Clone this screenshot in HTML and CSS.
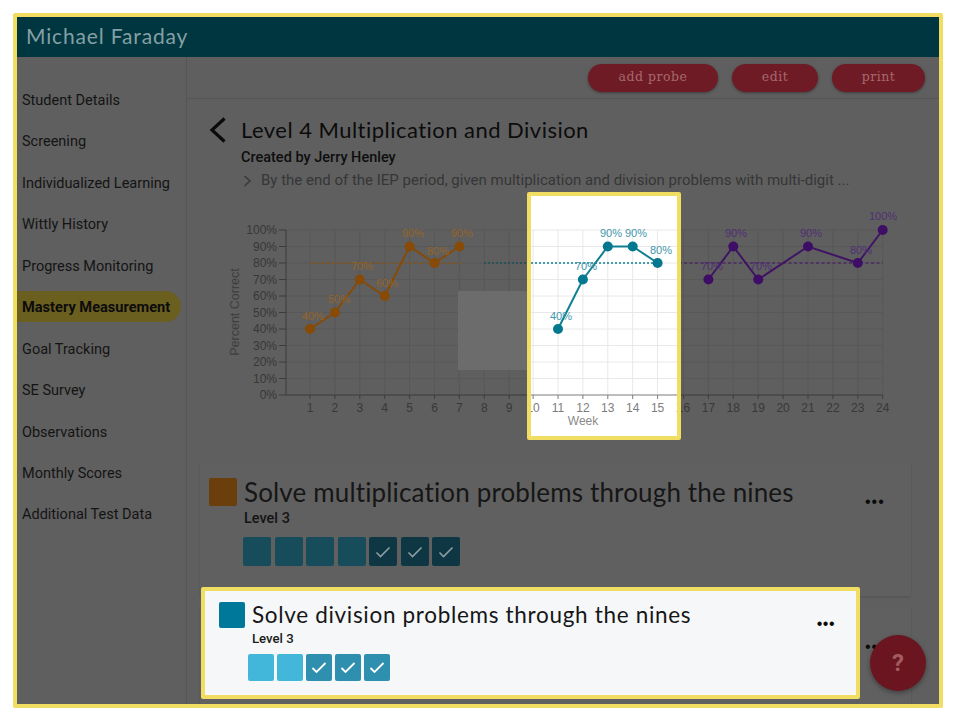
FILE: index.html
```html
<!DOCTYPE html>
<html lang="en">
<head>
<meta charset="utf-8">
<title>Mastery Measurement</title>
<link rel="stylesheet" href="styles.css">
</head>
<body>
<div class="frame">
  <header class="app-header">Michael Faraday</header>
  <div class="app-body">
    <nav class="sidebar">
      <a class="nav-item">Student Details</a>
      <a class="nav-item">Screening</a>
      <a class="nav-item">Individualized Learning</a>
      <a class="nav-item">Wittly History</a>
      <a class="nav-item">Progress Monitoring</a>
      <a class="nav-item active">Mastery Measurement</a>
      <a class="nav-item">Goal Tracking</a>
      <a class="nav-item">SE Survey</a>
      <a class="nav-item">Observations</a>
      <a class="nav-item">Monthly Scores</a>
      <a class="nav-item">Additional Test Data</a>
    </nav>
    <main class="main">
      <div class="toolbar">
        <button class="pill pill-probe">add probe</button>
        <button class="pill pill-edit">edit</button>
        <button class="pill pill-print">print</button>
      </div>
      <section class="heading">
        <svg class="back" width="18" height="26" viewBox="0 0 18 26"><path d="M15.5 1.5 L3 13 L15.5 24.5" fill="none" stroke="#0a0a0a" stroke-width="3.2"/></svg>
        <div class="heading-text">
          <h1 class="title">Level 4 Multiplication and Division</h1>
          <div class="creator">Created by Jerry Henley</div>
          <div class="objective">
            <svg class="caret" width="9" height="12" viewBox="0 0 9 12"><path d="M1.5 1 L7 6 L1.5 11" fill="none" stroke="#3a3a3a" stroke-width="1.6"/></svg>
            <span>By the end of the IEP period, given multiplication and division problems with multi-digit ...</span>
          </div>
        </div>
      </section>

      <svg class="chart" width="753" height="230" viewBox="186 205 753 230">
        <defs>
          <path id="grid" fill="none" d="M309 230V395M333.9 230V395M358.8 230V395M383.7 230V395M408.6 230V395M433.5 230V395M458.4 230V395M483.3 230V395M508.2 230V395M533.1 230V395M558 230V395M582.9 230V395M607.8 230V395M632.7 230V395M657.6 230V395M682.5 230V395M707.4 230V395M732.3 230V395M757.2 230V395M782.1 230V395M807 230V395M831.9 230V395M856.8 230V395M881.7 230V395M285 230H881.7M285 246.5H881.7M285 263H881.7M285 279.5H881.7M285 296H881.7M285 312.5H881.7M285 329H881.7M285 345.5H881.7M285 362H881.7M285 378.5H881.7"/>
          <path id="axis" fill="none" d="M278 230H285V395M278 246.5H285M278 263H285M278 279.5H285M278 296H285M278 312.5H285M278 329H285M278 345.5H285M278 362H285M278 378.5H285M278 395H881.7V399M309 395V399M333.9 395V399M358.8 395V399M383.7 395V399M408.6 395V399M433.5 395V399M458.4 395V399M483.3 395V399M508.2 395V399M533.1 395V399M558 395V399M582.9 395V399M607.8 395V399M632.7 395V399M657.6 395V399M682.5 395V399M707.4 395V399M732.3 395V399M757.2 395V399M782.1 395V399M807 395V399M831.9 395V399M856.8 395V399"/>
          <g id="weeks" text-anchor="middle">
            <text x="309" y="411.5">1</text><text x="333.9" y="411.5">2</text><text x="358.8" y="411.5">3</text><text x="383.7" y="411.5">4</text><text x="408.6" y="411.5">5</text><text x="433.5" y="411.5">6</text><text x="458.4" y="411.5">7</text><text x="483.3" y="411.5">8</text><text x="508.2" y="411.5">9</text><text x="533.1" y="411.5">10</text><text x="558" y="411.5">11</text><text x="582.9" y="411.5">12</text><text x="607.8" y="411.5">13</text><text x="632.7" y="411.5">14</text><text x="657.6" y="411.5">15</text><text x="682.5" y="411.5">16</text><text x="707.4" y="411.5">17</text><text x="732.3" y="411.5">18</text><text x="757.2" y="411.5">19</text><text x="782.1" y="411.5">20</text><text x="807" y="411.5">21</text><text x="831.9" y="411.5">22</text><text x="856.8" y="411.5">23</text><text x="881.7" y="411.5">24</text>
          </g>
        </defs>
        <use href="#grid" class="grid-dim"/>
        <use href="#axis" class="axis-dim"/>
        <g class="ylabels" text-anchor="end">
          <text x="276" y="234">100%</text><text x="276" y="250.5">90%</text><text x="276" y="267">80%</text><text x="276" y="283.5">70%</text><text x="276" y="300">60%</text><text x="276" y="316.5">50%</text><text x="276" y="333">40%</text><text x="276" y="349.5">30%</text><text x="276" y="366">20%</text><text x="276" y="382.5">10%</text><text x="276" y="399">0%</text>
        </g>
        <use href="#weeks" class="weeks-dim"/>
        <text class="ytitle" transform="translate(238 312) rotate(-90)" text-anchor="middle">Percent Correct</text>

        <path class="target orange-t" d="M309 263H460"/>
        <path class="series orange-s" d="M309 329L333.9 312.5L358.8 279.5L383.7 296L408.6 246.5L433.5 263L458.4 246.5"/>
        <g class="orange-p"><circle cx="309" cy="329" r="5"/><circle cx="333.9" cy="312.5" r="5"/><circle cx="358.8" cy="279.5" r="5"/><circle cx="383.7" cy="296" r="5"/><circle cx="408.6" cy="246.5" r="5"/><circle cx="433.5" cy="263" r="5"/><circle cx="458.4" cy="246.5" r="5"/></g>
        <g class="dlabel orange-l" text-anchor="middle"><text x="312" y="320">40%</text><text x="338" y="303">50%</text><text x="361" y="270">70%</text><text x="386" y="287">60%</text><text x="412" y="237">90%</text><text x="437" y="255">80%</text><text x="461" y="237">90%</text></g>

        <path class="target teal-t" d="M483 263H683"/>

        <path class="target purple-t" d="M683 263H881.7"/>
        <path class="series purple-s" d="M707.4 279.5L732.3 246.5L757.2 279.5L807 246.5L856.8 263L881.7 230"/>
        <g class="purple-p"><circle cx="707.4" cy="279.5" r="5"/><circle cx="732.3" cy="246.5" r="5"/><circle cx="757.2" cy="279.5" r="5"/><circle cx="807" cy="246.5" r="5"/><circle cx="856.8" cy="263" r="5"/><circle cx="881.7" cy="230" r="5"/></g>
        <g class="dlabel purple-l" text-anchor="middle"><text x="711" y="270">70%</text><text x="735" y="237">90%</text><text x="760" y="270">70%</text><text x="810" y="237">90%</text><text x="860" y="254">80%</text><text x="882" y="220">100%</text></g>
      </svg>

      <article class="card">
        <span class="swatch swatch-orange"></span>
        <div class="card-body">
          <h2 class="card-title">Solve multiplication problems through the nines</h2>
          <div class="card-level">Level 3</div>
          <div class="probes">
            <span class="probe"></span><span class="probe"></span><span class="probe"></span><span class="probe"></span>
            <span class="probe done"><svg width="16" height="12" viewBox="0 0 16 12"><path d="M1.5 6.5L5.5 10.5L14.5 1.5" fill="none" stroke="#8c9da3" stroke-width="1.6"/></svg></span>
            <span class="probe done"><svg width="16" height="12" viewBox="0 0 16 12"><path d="M1.5 6.5L5.5 10.5L14.5 1.5" fill="none" stroke="#8c9da3" stroke-width="1.6"/></svg></span>
            <span class="probe done"><svg width="16" height="12" viewBox="0 0 16 12"><path d="M1.5 6.5L5.5 10.5L14.5 1.5" fill="none" stroke="#8c9da3" stroke-width="1.6"/></svg></span>
          </div>
        </div>
        <span class="more">•••</span>
      </article>
      <article class="card card-next">
        <span class="more">•••</span>
      </article>
    </main>
  </div>

  <div class="ghost-tip"></div>

  <div class="spot spot-chart">
    <svg width="146" height="240" viewBox="531 196 146 240">
      <use href="#grid" class="grid-lit"/>
      <path class="axis-lit" d="M531 395H677M533.1 395V399M558 395V399M582.9 395V399M607.8 395V399M632.7 395V399M657.6 395V399"/>
      <use href="#weeks" class="weeks-lit"/>
      <text class="week-title" x="583" y="425" text-anchor="middle">Week</text>
      <path class="target teal-lit" d="M531 263H658"/>
      <path class="series teal-line" d="M558 329L582.9 279.5L607.8 246.5L632.7 246.5L657.6 263"/>
      <g class="teal-p"><circle cx="558" cy="329" r="5"/><circle cx="582.9" cy="279.5" r="5"/><circle cx="607.8" cy="246.5" r="5"/><circle cx="632.7" cy="246.5" r="5"/><circle cx="657.6" cy="263" r="5"/></g>
      <g class="dlabel teal-l" text-anchor="middle"><text x="561" y="320">40%</text><text x="586" y="270">70%</text><text x="611" y="237">90%</text><text x="636" y="237">90%</text><text x="661" y="254">80%</text></g>
    </svg>
  </div>

  <article class="spot spot-card">
    <span class="lit-swatch"></span>
    <div class="lit-body">
      <h2 class="lit-title">Solve division problems through the nines</h2>
      <div class="lit-level">Level 3</div>
      <div class="lit-probes">
        <span class="lit-probe"></span><span class="lit-probe"></span>
        <span class="lit-probe done"><svg width="16" height="13" viewBox="0 0 16 13"><path d="M1.5 7L5.5 11L14.5 2" fill="none" stroke="#fff" stroke-width="1.8"/></svg></span>
        <span class="lit-probe done"><svg width="16" height="13" viewBox="0 0 16 13"><path d="M1.5 7L5.5 11L14.5 2" fill="none" stroke="#fff" stroke-width="1.8"/></svg></span>
        <span class="lit-probe done"><svg width="16" height="13" viewBox="0 0 16 13"><path d="M1.5 7L5.5 11L14.5 2" fill="none" stroke="#fff" stroke-width="1.8"/></svg></span>
      </div>
    </div>
    <span class="more lit-more">•••</span>
  </article>

  <button class="fab">?</button>
</div>
</body>
</html>
```
FILE: styles.css
```css
* { box-sizing: border-box; }
html, body { margin: 0; padding: 0; background: #fff; }
body { width: 960px; height: 720px; overflow: hidden; font-family: Roboto, "Liberation Sans", sans-serif; }

.frame {
  position: relative;
  width: 930px;
  height: 695px;
  margin: 13px 0 0 13px;
  border: 4px solid #f0dd62;
  border-radius: 2px;
  background: #5f5f5f;
  display: flex;
  flex-direction: column;
  overflow: hidden;
}
.app-header {
  flex: none;
  height: 40px;
  background: #00363f;
  color: #84a0a4;
  font-family: Lato, sans-serif;
  font-size: 21px;
  line-height: 38px;
  letter-spacing: .85px;
  padding-left: 9px;
}
.app-body { flex: 1; display: flex; min-height: 0; }

.sidebar {
  flex: none;
  width: 170px;
  padding: 23px 5px 0 0;
  border-right: 1px solid #555;
}
.nav-item {
  display: block;
  height: 41.45px;
  line-height: 41.45px;
  padding-left: 5px;
  font-size: 14.5px;
  color: #141414;
  white-space: nowrap;
}
.nav-item.active {
  height: 31px;
  line-height: 33px;
  margin: 4px 0 6.45px;
  background: #6b5f20;
  border-radius: 0 16px 16px 0;
  font-weight: 700;
  color: #0c0c0c;
  font-size: 14.6px;
}

.main { flex: 1; min-width: 0; overflow: hidden; }
.toolbar {
  height: 42px;
  border-bottom: 1px solid #555;
  display: flex;
  justify-content: flex-end;
  gap: 14px;
  padding: 7px 14px 0 0;
}
.pill {
  height: 28px;
  border: 0;
  border-radius: 14px;
  background: #6f1b25;
  color: #a5696f;
  font-family: "DejaVu Serif", serif;
  font-size: 12.5px;
  letter-spacing: .5px;
  box-shadow: 0 1px 3px rgba(0,0,0,.35);
  padding: 0 0 3px;
}
.pill-probe { width: 130px; }
.pill-edit { width: 86px; }
.pill-print { width: 93px; }

.heading {
  height: 106px;
  display: flex;
  padding: 18px 0 0 22px;
}
.back { flex: none; margin-right: 14px; }
.heading-text { min-width: 0; }
.title {
  margin: 0;
  font-family: Lato, sans-serif;
  font-weight: 400;
  font-size: 22px;
  line-height: 26px;
  letter-spacing: .47px;
  color: #0c0c0c;
  white-space: nowrap;
}
.creator { margin-top: 6px; font-size: 14.5px; line-height: 17px; font-weight: 500; color: #0e0e0e; }
.objective {
  margin-top: 6px;
  display: flex;
  align-items: center;
  font-size: 15px;
  line-height: 17px;
  color: #363636;
  white-space: nowrap;
}
.caret { margin: 0 9px 0 2px; flex: none; }

.chart { display: block; font-family: "Liberation Sans", sans-serif; }
.grid-dim { stroke: #585858; stroke-width: 1; }
.axis-dim { stroke: #3c3c3c; stroke-width: 1; }
.ylabels, .weeks-dim { fill: #383838; font-size: 12px; }
.ytitle { fill: #3e3e3e; font-size: 12.5px; }
.target { fill: none; stroke-width: 1.6; stroke-dasharray: 3 2.5; }
.series { fill: none; stroke-width: 2; }
.dlabel { font-size: 11px; }
.orange-t { stroke: #85551b; }
.orange-s { stroke: #874a07; }
.orange-p { fill: #874a07; }
.orange-l { fill: #94652a; }
.teal-t { stroke: #1d4f59; stroke-dasharray: 2 2; }
.purple-t { stroke: #4b2a66; }
.purple-s { stroke: #3e1463; }
.purple-p { fill: #3e0e66; }
.purple-l { fill: #4f2f74; }

.card {
  position: relative;
  width: 711px;
  height: 134px;
  margin: 27px 0 0 13px;
  padding: 16px 0 0 9px;
  display: flex;
  background: #606060;
  box-shadow: 0 1px 2px rgba(0,0,0,.14);
}
.card-next { height: 120px; margin-top: 11px; }
.swatch { flex: none; width: 28px; height: 28px; border-radius: 2px; margin-right: 7px; }
.swatch-orange { background: #6b3f0c; }
.card-title {
  margin: 0;
  font-family: Lato, sans-serif;
  font-weight: 400;
  font-size: 26px;
  line-height: 29px;
  letter-spacing: .15px;
  color: #161616;
  white-space: nowrap;
}
.card-level { margin-top: 3px; font-size: 14.5px; line-height: 17px; color: #141414; font-weight: 500; }
.probes { display: flex; gap: 3.5px; margin: 10px 0 0 -1px; }
.probe {
  width: 28px;
  height: 29px;
  border-radius: 2px;
  background: #174c5b;
  display: flex;
  align-items: center;
  justify-content: center;
}
.probe.done { background: #0f3743; }
.more {
  position: absolute;
  right: 26px;
  top: 31px;
  font-family: "Liberation Sans", sans-serif;
  font-size: 16px;
  line-height: 18px;
  letter-spacing: 1.1px;
  color: #0a0a0a;
}

.ghost-tip {
  position: absolute;
  left: 441px;
  top: 274px;
  width: 70px;
  height: 79px;
  background: #6c6c6c;
}

.spot {
  position: absolute;
  border: 4px solid #f0dd62;
  border-radius: 2px;
  background: #fff;
}
.spot-chart { left: 510px; top: 175px; width: 154px; height: 248px; }
.spot-chart svg { display: block; font-family: "Liberation Sans", sans-serif; }
.grid-lit { stroke: #e8e8e8; stroke-width: 1; }
.axis-lit { stroke: #7c7c7c; stroke-width: 1; fill: none; }
.weeks-lit { fill: #7d7d7d; font-size: 12px; }
.week-title { fill: #8a8a8a; font-size: 12px; }
.teal-lit { stroke: #117f93; stroke-dasharray: 2 2; }
.teal-line { stroke: #117f93; }
.teal-p { fill: #04788e; }
.teal-l { fill: #3f97ad; }

.spot-card {
  left: 184px;
  top: 570px;
  width: 659px;
  height: 112px;
  display: flex;
  padding: 11px 0 0 14px;
  background: #f5f7f9;
}
.lit-swatch { flex: none; width: 26px; height: 26px; border-radius: 2px; background: #00789a; margin-right: 7px; }
.lit-title {
  margin: 0;
  font-family: Lato, sans-serif;
  font-weight: 400;
  font-size: 22.5px;
  line-height: 26px;
  letter-spacing: .68px;
  color: #161616;
  white-space: nowrap;
}
.lit-level { margin-top: 3px; font-size: 13.2px; line-height: 15px; color: #1a1a1a; font-weight: 500; }
.lit-probes { display: flex; gap: 3px; margin: 8px 0 0 -4px; }
.lit-probe {
  width: 26px;
  height: 27px;
  border-radius: 2px;
  background: #43b7d9;
  display: flex;
  align-items: center;
  justify-content: center;
}
.lit-probe.done { background: #2e8fae; }
.lit-more { right: 21px; top: 24px; letter-spacing: .5px; color: #0a0a0a; }

.fab {
  position: absolute;
  right: 13px;
  bottom: 13px;
  width: 56px;
  height: 56px;
  border: 0;
  border-radius: 50%;
  padding: 0;
  background: #6a1520;
  color: #a25c62;
  font-family: Roboto, sans-serif;
  font-size: 24px;
  font-weight: 700;
  box-shadow: 0 2px 5px rgba(0,0,0,.35);
}
```
